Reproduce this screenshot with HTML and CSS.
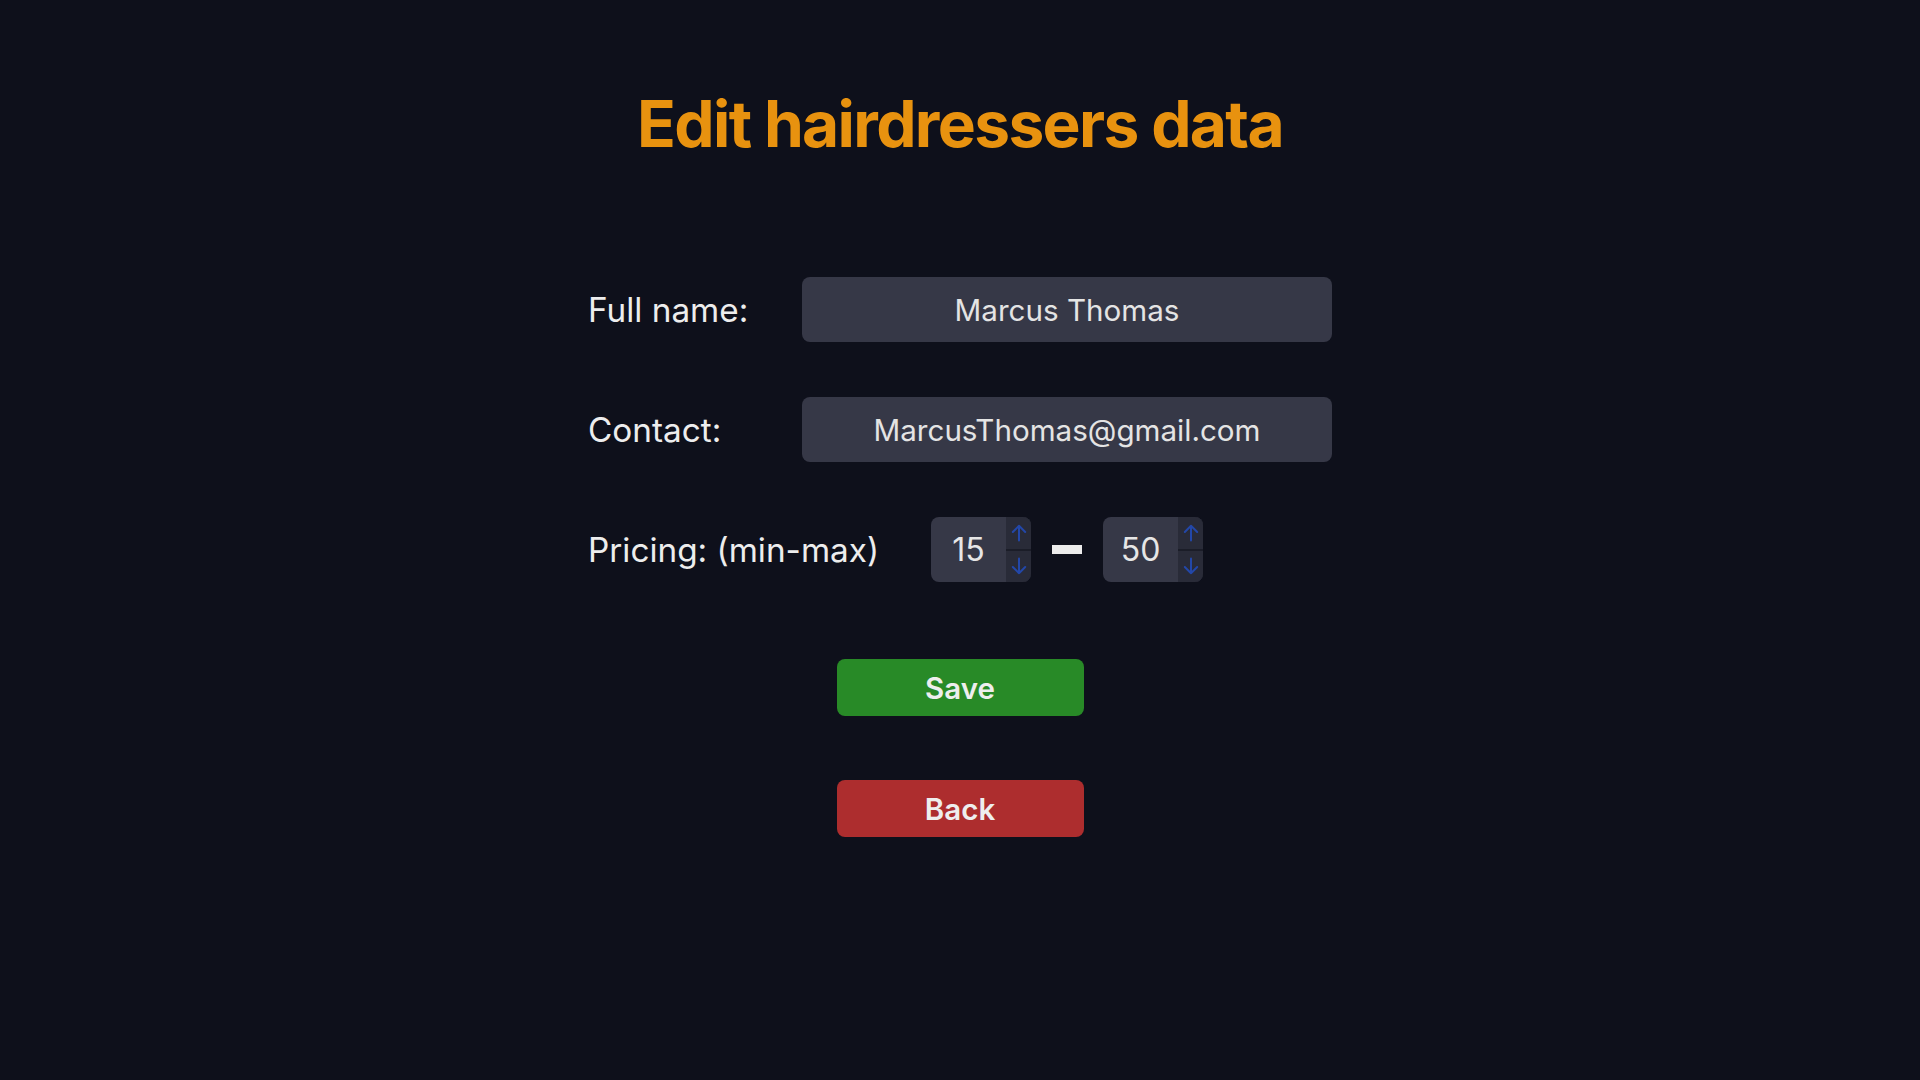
FILE: index.html
```html
<!DOCTYPE html>
<html lang="en">
<head>
<meta charset="utf-8">
<title>Edit hairdressers data</title>
<link rel="stylesheet" href="styles.css">
</head>
<body>
<main class="page">
  <h1 class="title">Edit hairdressers data</h1>
  <form class="form">
    <div class="row">
      <label class="label label-fixed">Full name:</label>
      <div class="field">Marcus Thomas</div>
    </div>
    <div class="row">
      <label class="label label-fixed">Contact:</label>
      <div class="field">MarcusThomas@gmail.com</div>
    </div>
    <div class="row row-pricing">
      <label class="label">Pricing: (min-max)</label>
      <div class="num">
        <span class="num-value">15</span>
        <div class="spin">
          <span class="spin-btn"><svg viewBox="0 0 16 18" class="arrow"><path d="M8 16.5V1.8M1.8 8L8 1.8L14.2 8"/></svg></span>
          <span class="spin-btn"><svg viewBox="0 0 16 18" class="arrow"><path d="M8 1.5V16.2M1.8 10L8 16.2L14.2 10"/></svg></span>
        </div>
      </div>
      <span class="dash"></span>
      <div class="num">
        <span class="num-value">50</span>
        <div class="spin">
          <span class="spin-btn"><svg viewBox="0 0 16 18" class="arrow"><path d="M8 16.5V1.8M1.8 8L8 1.8L14.2 8"/></svg></span>
          <span class="spin-btn"><svg viewBox="0 0 16 18" class="arrow"><path d="M8 1.5V16.2M1.8 10L8 16.2L14.2 10"/></svg></span>
        </div>
      </div>
    </div>
  </form>
  <div class="actions">
    <button class="btn btn-save" type="button">Save</button>
    <button class="btn btn-back" type="button">Back</button>
  </div>
</main>
</body>
</html>
```
FILE: styles.css
```css
* { box-sizing: border-box; }

html, body {
  margin: 0;
  background: #0e101b;
}

body {
  font-family: Inter, "Noto Sans", "Liberation Sans", sans-serif;
  color: #ececec;
  min-height: 1080px;
}

.page {
  display: flex;
  flex-direction: column;
  align-items: center;
  padding-top: 85px;
}

.title {
  margin: 0;
  font-size: 64px;
  font-weight: 700;
  color: #e8920f;
  line-height: 77px;
  letter-spacing: -1.65px;
}

.form {
  margin-top: 115px;
  width: 744px;
  display: flex;
  flex-direction: column;
  gap: 55px;
}

.row {
  display: flex;
  align-items: center;
  height: 65px;
}

.label {
  font-size: 33.3px;
  color: #ededed;
  white-space: nowrap;
}

.label-fixed {
  width: 214px;
  flex: none;
}

.field {
  width: 530px;
  height: 65px;
  border-radius: 8px;
  background: #363847;
  display: flex;
  align-items: center;
  justify-content: center;
  font-size: 29.6px;
  color: #e4e4e4;
}

.row-pricing {
  gap: 21px;
}

.row-pricing .label {
  margin-right: 31px;
}

.num {
  width: 100px;
  height: 65px;
  border-radius: 8px;
  background: #363847;
  display: flex;
  overflow: hidden;
  flex: none;
}

.num-value {
  flex: 1;
  display: flex;
  align-items: center;
  justify-content: center;
  font-size: 32px;
  color: #e6e6e6;
}

.spin {
  width: 25px;
  display: flex;
  flex-direction: column;
  gap: 2px;
  background: #1b1d28;
}

.spin-btn {
  flex: 1;
  background: #292b38;
  display: flex;
  align-items: center;
  justify-content: center;
}

.arrow {
  width: 16px;
  height: 18px;
  fill: none;
  stroke: #2347a8;
  stroke-width: 2;
  stroke-linecap: round;
  stroke-linejoin: round;
}

.dash {
  width: 30px;
  height: 9px;
  background: #ececec;
  flex: none;
}

.actions {
  margin-top: 77px;
  display: flex;
  flex-direction: column;
  align-items: center;
  gap: 64px;
}

.btn {
  width: 247px;
  height: 57px;
  border: none;
  border-radius: 8px;
  font-family: Inter, "Noto Sans", "Liberation Sans", sans-serif;
  font-size: 29.5px;
  font-weight: 600;
  color: #eeeeee;
  cursor: pointer;
}

.btn-save { background: #288a27; }
.btn-back { background: #ad2d2e; }
```
